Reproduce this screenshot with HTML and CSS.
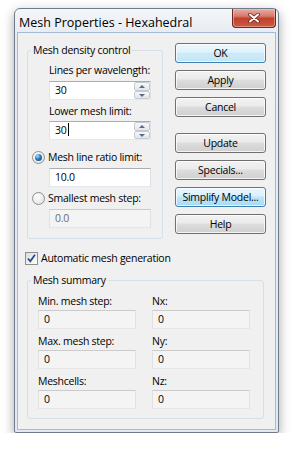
FILE: index.html
```html
<!DOCTYPE html>
<html lang="en">
<head>
  <meta charset="UTF-8" />
  <title>Mesh Properties - Hexahedral</title>
  <link rel="stylesheet" href="styles.css">
</head>
<body>
  <div class="window">
    <div class="titlebar">
      <span class="title">Mesh Properties - Hexahedral</span>
      <div class="close">
        <svg width="12" height="10" viewBox="0 0 12 10">
          <path d="M2 1.5 L10 8.5 M10 1.5 L2 8.5" stroke="#5a2620" stroke-width="3.6" stroke-linecap="round" />
          <path d="M2 1.5 L10 8.5 M10 1.5 L2 8.5" stroke="#fff" stroke-width="2" stroke-linecap="round" />
        </svg>
      </div>
    </div>

    <div class="client">
      <div class="top">
        <fieldset class="group density">
          <legend>Mesh density control</legend>

          <div class="indent">
            <span class="lbl">Lines per wavelength:</span>
            <div class="edit spin">
              <span class="value">30</span>
              <div class="arrows"><span class="up"></span><span class="down"></span></div>
            </div>

            <span class="lbl next">Lower mesh limit:</span>
            <div class="edit spin">
              <span class="value">30<i class="caret"></i></span>
              <div class="arrows"><span class="up"></span><span class="down"></span></div>
            </div>
          </div>

          <div class="radio-row first">
            <span class="radio on"></span>
            <span>Mesh line ratio limit:</span>
          </div>
          <div class="indent">
            <div class="edit">10.0</div>
          </div>

          <div class="radio-row">
            <span class="radio"></span>
            <span>Smallest mesh step:</span>
          </div>
          <div class="indent">
            <div class="edit off">0.0</div>
          </div>
        </fieldset>

        <div class="buttons">
          <div class="btn default">OK</div>
          <div class="btn">Apply</div>
          <div class="btn">Cancel</div>
          <div class="btn spaced">Update</div>
          <div class="btn">Specials...</div>
          <div class="btn hot">Simplify Model...</div>
          <div class="btn">Help</div>
        </div>
      </div>

      <div class="check-row">
        <span class="checkbox">
          <svg width="11" height="11" viewBox="0 0 11 11">
            <path d="M2 5.5 L4.3 8.3 L9 1.8" fill="none" stroke="#2b4a8b" stroke-width="1.8" />
          </svg>
        </span>
        <span>Automatic mesh generation</span>
      </div>

      <fieldset class="group summary">
        <legend>Mesh summary</legend>
        <div class="summary-grid">
          <div><span class="lbl">Min. mesh step:</span><div class="edit off dark">0</div></div>
          <div><span class="lbl">Nx:</span><div class="edit off dark">0</div></div>
          <div><span class="lbl">Max. mesh step:</span><div class="edit off dark">0</div></div>
          <div><span class="lbl">Ny:</span><div class="edit off dark">0</div></div>
          <div><span class="lbl">Meshcells:</span><div class="edit off dark">0</div></div>
          <div><span class="lbl">Nz:</span><div class="edit off dark">0</div></div>
        </div>
      </fieldset>
    </div>
  </div>
</body>
</html>
```

FILE: styles.css
```css
* { box-sizing: border-box; }
body {
  margin: 0;
  background: #fff;
  font-family: "Open Sans", "Noto Sans", sans-serif;
  font-size: 10.5px;
  letter-spacing: -0.25px;
  color: #000;
}
.window {
  width: 265px;
  margin: 8px 0 0 14px;
  padding: 0 2px 2px;
  border: 1px solid #6f7c8b;
  border-radius: 6px 6px 2px 2px;
  background: linear-gradient(#f4f7fa, #e6ecf2 24px, #e3e9f0);
  box-shadow: 0 4px 12px rgba(0, 0, 0, 0.35);
}
.titlebar {
  height: 23px;
  display: flex;
  align-items: center;
  justify-content: space-between;
}
.title {
  font-size: 12.5px;
  letter-spacing: 0;
  padding: 4px 0 0 2px;
  color: #000;
}
.close {
  align-self: flex-start;
  width: 44px;
  height: 19px;
  border: 1px solid #6a2a25;
  border-top: none;
  border-radius: 0 0 4px 4px;
  background: linear-gradient(#e9ada3, #d77a6a 40%, #c2412d 52%, #cc5a40);
  box-shadow: inset 0 0 0 1px rgba(255, 200, 190, 0.5);
  display: flex;
  align-items: center;
  justify-content: center;
}
.client {
  background: #f0f0f0;
  border: 1px solid #a3bbd7;
  padding: 10px 9px 10px 9px;
}
.top {
  display: flex;
  gap: 12px;
  align-items: flex-start;
}
.group {
  margin: 0;
  min-width: 0;
  border: 1px solid #d5dfe5;
  border-radius: 3px;
}
.group legend {
  padding: 0 2px;
  line-height: 14px;
}
.density {
  flex: 1;
  padding: 6px 0 10px 4px;
}
.density legend { margin-left: -1px; }
.indent { margin-left: 17px; }
.lbl {
  display: block;
  height: 14px;
  line-height: 14px;
  white-space: nowrap;
}
.lbl.next { margin-top: 4px; }
.edit {
  height: 19px;
  width: 102px;
  margin-top: 3px;
  padding: 0 5px;
  line-height: 17px;
  background: #fff;
  border: 1px solid;
  border-color: #abadb3 #dbdfe6 #e3e9ef #e2e3ea;
}
.indent > .edit:first-of-type { margin-top: 4px; }
.edit.spin {
  display: flex;
  padding-right: 0;
}
.edit .value { flex: 1; }
.caret {
  display: inline-block;
  width: 1px;
  height: 13px;
  margin-left: 1px;
  background: #000;
  vertical-align: -2px;
}
.arrows {
  width: 16px;
  display: flex;
  flex-direction: column;
}
.arrows span {
  flex: 1;
  position: relative;
  border: 1px solid #c4cad2;
  border-radius: 2px;
  background: linear-gradient(#f6f7f8, #e3e6ea);
}
.arrows span::after {
  content: "";
  position: absolute;
  left: 4px;
  top: 2px;
  border-left: 3px solid transparent;
  border-right: 3px solid transparent;
}
.arrows .up::after { border-bottom: 3px solid #59698a; }
.arrows .down::after { border-top: 3px solid #59698a; }
.edit.off {
  background: #f4f4f4;
  border-color: #cbcbcb #e1e1e1 #e6e6e6 #e1e1e1;
  color: #6d6d6d;
}
.edit.off.dark { color: #000; }
.radio-row {
  display: flex;
  align-items: center;
  gap: 3px;
  height: 14px;
  margin-top: 4px;
  white-space: nowrap;
}
.radio-row.first { margin-top: 10px; }
.radio {
  width: 13px;
  height: 13px;
  border-radius: 50%;
  border: 1px solid #8e8f8f;
  background: radial-gradient(circle at 40% 35%, #fff, #dcdcdc);
  display: flex;
  align-items: center;
  justify-content: center;
}
.radio.on::after {
  content: "";
  width: 7px;
  height: 7px;
  border-radius: 50%;
  background: radial-gradient(circle at 35% 30%, #a8e2fb, #2a7bc4 45%, #0f3c76);
}
.buttons {
  width: 91px;
  display: flex;
  flex-direction: column;
  gap: 7px;
}
.btn {
  height: 20px;
  line-height: 18px;
  text-align: center;
  white-space: nowrap;
  border: 1px solid #707070;
  border-radius: 3px;
  background: linear-gradient(#f2f2f2, #ebebeb 45%, #dddddd 50%, #cfcfcf);
  box-shadow: inset 0 0 0 1px rgba(255, 255, 255, 0.75);
}
.btn.default {
  border-color: #3c7fb1;
  background: linear-gradient(#eef8fd, #e0f2fb 45%, #cdeaf9 50%, #c3e5f7);
}
.btn.hot {
  border-color: #3c7fb1;
  background: linear-gradient(#eaf6fd, #d9f0fc 45%, #bee6fd 50%, #a7d9f5);
}
.btn.spaced { margin-top: 9px; }
.check-row {
  display: flex;
  align-items: center;
  gap: 3px;
  height: 14px;
  margin: 12px 0 0 -2px;
}
.checkbox {
  width: 13px;
  height: 13px;
  border: 1px solid #8e8f8f;
  background: linear-gradient(135deg, #dcdcdc, #fff);
  display: flex;
  align-items: center;
  justify-content: center;
}
.summary {
  margin: 8px 2px 0 0;
  padding: 7px 0 9px 10px;
}
.summary legend { margin-left: -7px; }
.summary-grid {
  display: grid;
  grid-template-columns: 98px 98px;
  column-gap: 16px;
  row-gap: 5px;
}
.summary-grid .edit {
  width: 98px;
  margin-top: 2px;
}
```
